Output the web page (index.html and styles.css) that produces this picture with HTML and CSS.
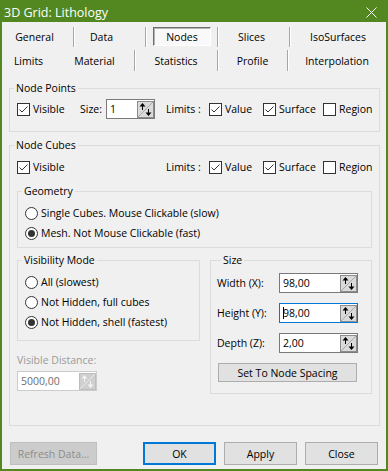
FILE: index.html
```html
<!DOCTYPE html>
<html lang="en">
<head>
  <meta charset="UTF-8">
  <title>3D Grid: Lithology</title>
  <link rel="stylesheet" href="styles.css">
</head>
<body>
  <!-- shared glyphs -->
  <svg class="defs" xmlns="http://www.w3.org/2000/svg">
    <symbol id="spin" viewBox="0 0 17 17">
      <rect x="0.5" y="0.5" width="16" height="16" fill="#dadada" stroke="#8d8d8d"/>
      <path d="M1 16 L16 1" stroke="#a8a8a8"/>
      <path d="M5.5 2 L2.5 5.5 H5 V9 H6 V5.5 H8.5 Z" fill="#000"/>
      <path d="M11.5 15 L8.5 11.5 H11 V8 H12 V11.5 H14.5 Z" fill="#000"/>
    </symbol>
    <symbol id="spin-off" viewBox="0 0 17 17">
      <rect x="0.5" y="0.5" width="16" height="16" fill="#cfcfcf" stroke="#bdbdbd"/>
      <path d="M1 16 L16 1" stroke="#e8e8e8"/>
      <path d="M5.5 2 L2.5 5.5 H5 V9 H6 V5.5 H8.5 Z" fill="#f4f4f4"/>
      <path d="M11.5 15 L8.5 11.5 H11 V8 H12 V11.5 H14.5 Z" fill="#f4f4f4"/>
    </symbol>
    <symbol id="tick" viewBox="0 0 11 11">
      <path d="M1.5 5.5 L4 8 L9.5 2.5" fill="none" stroke="#333" stroke-width="1"/>
    </symbol>
  </svg>

  <div class="window">
    <div class="titlebar">
      <span class="title">3D Grid: Lithology</span>
      <svg class="close" width="11" height="11" viewBox="0 0 11 11"><path d="M0.5 0.5 L10.5 10.5 M10.5 0.5 L0.5 10.5" stroke="#fff" stroke-width="1"/></svg>
    </div>

    <div class="tabs">
      <div class="tab-row">
        <div class="tab tab-general sep">General</div>
        <div class="tab tab-data sep">Data</div>
        <div class="tab tab-nodes sep"><span class="pressed">Nodes</span></div>
        <div class="tab tab-slices sep">Slices</div>
        <div class="tab tab-iso">IsoSurfaces</div>
      </div>
      <div class="tab-row row-2">
        <div class="tab tab-limits">Limits</div>
        <div class="tab tab-material sep">Material</div>
        <div class="tab tab-stats sep">Statistics</div>
        <div class="tab tab-profile sep">Profile</div>
        <div class="tab tab-interp">Interpolation</div>
      </div>
    </div>

    <fieldset class="group points">
      <legend>Node Points</legend>
      <div class="row">
        <label class="check w-visible"><span class="box"><svg><use href="#tick"/></svg></span>Visible</label>
        <span class="lbl w-size">Size:</span>
        <span class="edit w-size-edit"><span class="val">1</span><svg class="spin"><use href="#spin"/></svg></span>
        <span class="lbl w-limits">Limits :</span>
        <label class="check w-value"><span class="box"><svg><use href="#tick"/></svg></span>Value</label>
        <label class="check w-surface"><span class="box"><svg><use href="#tick"/></svg></span>Surface</label>
        <label class="check"><span class="box"></span>Region</label>
      </div>
    </fieldset>

    <fieldset class="group cubes">
      <legend>Node Cubes</legend>
      <div class="row">
        <label class="check w-visible-wide"><span class="box"><svg><use href="#tick"/></svg></span>Visible</label>
        <span class="lbl w-limits">Limits :</span>
        <label class="check w-value"><span class="box"><svg><use href="#tick"/></svg></span>Value</label>
        <label class="check w-surface"><span class="box"><svg><use href="#tick"/></svg></span>Surface</label>
        <label class="check"><span class="box"></span>Region</label>
      </div>

      <fieldset class="group geometry">
        <legend>Geometry</legend>
        <div class="radios">
          <label class="radio"><span class="dot"></span>Single Cubes. Mouse Clickable (slow)</label>
          <label class="radio"><span class="dot on"></span>Mesh. Not Mouse Clickable (fast)</label>
        </div>
      </fieldset>

      <div class="cols">
        <div class="col-left">
          <fieldset class="group visibility">
            <legend>Visibility Mode</legend>
            <div class="radios">
              <label class="radio"><span class="dot"></span>All (slowest)</label>
              <label class="radio"><span class="dot"></span>Not Hidden, full cubes</label>
              <label class="radio"><span class="dot on"></span>Not Hidden, shell (fastest)</label>
            </div>
          </fieldset>
          <div class="dist-label">Visible Distance:</div>
          <span class="edit disabled w-dist"><span class="val">5000,00</span><svg class="spin"><use href="#spin-off"/></svg></span>
        </div>

        <fieldset class="group size">
          <legend>Size</legend>
          <div class="size-row">
            <span class="size-lbl">Width (X):</span>
            <span class="edit w-num"><span class="val">98,00</span><svg class="spin"><use href="#spin"/></svg></span>
          </div>
          <div class="size-row">
            <span class="size-lbl">Height (Y):</span>
            <span class="edit w-num focused"><span class="val caret">98,00</span><svg class="spin"><use href="#spin"/></svg></span>
          </div>
          <div class="size-row">
            <span class="size-lbl">Depth (Z):</span>
            <span class="edit w-num"><span class="val">2,00</span><svg class="spin"><use href="#spin"/></svg></span>
          </div>
          <button class="btn btn-spacing">Set To Node Spacing</button>
        </fieldset>
      </div>
    </fieldset>

    <div class="actions">
      <button class="btn btn-refresh" disabled>Refresh Data...</button>
      <button class="btn btn-ok">OK</button>
      <button class="btn">Apply</button>
      <button class="btn">Close</button>
    </div>
  </div>
</body>
</html>
```

FILE: styles.css
```css
:root {
  --win-green: #538820;
  --face: #f0f0f0;
  --frame: #dcdcdc;
  --edit-border: #7a7a7a;
  --focus: #0078d7;
  --ink: #000;
  --muted: #9a9a9a;
}

* {
  margin: 0;
  padding: 0;
  box-sizing: border-box;
}

body {
  width: 388px;
  height: 471px;
  overflow: hidden;
  font-family: "Open Sans", "Noto Sans", sans-serif;
  font-size: 10.5px;
  color: var(--ink);
  background-color: var(--face);
}

.defs {
  display: none;
}

.window {
  width: 388px;
  height: 471px;
  display: flex;
  flex-direction: column;
  border: 2px solid var(--win-green);
  border-top: 0;
  background-color: var(--face);
}

/* title bar */
.titlebar {
  height: 22px;
  flex: none;
  display: flex;
  align-items: center;
  justify-content: space-between;
  padding: 0 9px 0 2px;
  background-color: var(--win-green);
  color: #fff;
}

.title {
  font-size: 12.5px;
  margin-top: 2px;
}

.close {
  display: block;
  margin-top: 3px;
}

/* tab headers */
.tab-row {
  display: flex;
  height: 20px;
  margin-top: 5px;
}

.tab-row.row-2 {
  height: 21px;
  margin-top: 3px;
}

.tab {
  display: flex;
  align-items: center;
  justify-content: center;
  flex: none;
}

.tab.sep {
  border-right: 1px solid #a6a6a6;
  box-shadow: 1px 0 0 #fff;
}

.tab-general { width: 72px; padding-right: 6px; }
.tab-data { width: 72px; padding-right: 16px; }
.tab-nodes { width: 72px; padding: 0 6px 1px 7px; align-items: stretch; }
.tab-slices { width: 72px; padding-right: 4px; }
.tab-iso { flex: 1; }

.tab-limits { width: 53px; }
.tab-material { width: 80px; }
.tab-stats { width: 83px; }
.tab-profile { width: 70px; }
.tab-interp { flex: 1; }

.pressed {
  flex: 1;
  display: flex;
  align-items: center;
  justify-content: center;
  padding-top: 1px;
  background-color: #f9f9f9;
  border: 1px solid #fff;
  border-top-color: #6e6e6e;
  border-left-color: #6e6e6e;
  box-shadow: inset 1px 1px 0 #b4b4b4;
}

/* group boxes */
.group {
  border: 1px solid var(--frame);
  min-width: 0;
}

.group > legend {
  margin-left: 4px;
  padding: 0 2px;
  height: 16px;
  line-height: 16px;
}

.points {
  margin: 9px 6px 0 7px;
  padding: 3px 0 12px;
}

.cubes {
  margin: 5px 6px 0 7px;
  padding: 4px 0 31px;
}

.geometry {
  margin: 6px 7px 0;
  padding: 4px 0 4px;
}

.row {
  display: flex;
  align-items: center;
  height: 20px;
  padding-left: 7px;
}

.lbl,
.check {
  flex: none;
}

.w-visible { width: 63px; }
.w-visible-wide { width: 138px; }
.w-size { width: 26px; }
.w-size-edit { width: 49px; }
.w-limits { width: 43px; margin-left: 11px; }
.w-value { width: 54px; }
.w-surface { width: 60px; }

.check,
.radio {
  display: flex;
  align-items: center;
  gap: 3px;
}

.box {
  width: 13px;
  height: 13px;
  flex: none;
  border: 1px solid #333;
  background-color: #fff;
}

.box svg {
  display: block;
  width: 11px;
  height: 11px;
}

.radios {
  padding-left: 7px;
}

.radio {
  height: 20px;
}

.dot {
  position: relative;
  width: 13px;
  height: 13px;
  flex: none;
  border: 1px solid #333;
  border-radius: 50%;
  background-color: #fff;
}

.dot.on::after {
  content: "";
  position: absolute;
  inset: 2px;
  border-radius: 50%;
  background-color: #333;
}

/* edit boxes with spinners */
.edit {
  display: flex;
  align-items: center;
  height: 20px;
  flex: none;
  padding-left: 3px;
  border: 1px solid var(--edit-border);
  background-color: #fff;
}

.edit .val {
  flex: 1;
  position: relative;
}

.edit .spin {
  width: 17px;
  height: 17px;
  flex: none;
}

.edit.focused {
  border-color: var(--focus);
}

.caret::before {
  content: "";
  position: absolute;
  left: 0;
  top: 1px;
  bottom: 1px;
  border-left: 1px solid #000;
}

.edit.disabled {
  border-color: #cccccc;
  color: #6d6d6d;
}

/* lower part of node cubes */
.cols {
  display: flex;
  gap: 10px;
  margin: 4px 7px 0;
}

.col-left {
  width: 183px;
  flex: none;
}

.visibility {
  padding: 4px 0 8px;
}

.dist-label {
  margin-top: 11px;
  height: 16px;
  line-height: 16px;
  color: var(--muted);
}

.w-dist {
  width: 80px;
  margin-top: 3px;
}

.size {
  flex: 1;
  padding: 5px 0 11px 6px;
}

.size-row {
  display: flex;
  align-items: center;
  height: 20px;
}

.size-row + .size-row {
  margin-top: 10px;
}

.size-lbl {
  width: 62px;
  flex: none;
}

.w-num {
  width: 79px;
}

.btn {
  display: flex;
  align-items: center;
  justify-content: center;
  font: inherit;
  color: var(--ink);
  background-color: #e1e1e1;
  border: 1px solid #adadad;
}

.btn-spacing {
  width: 139px;
  height: 19px;
  margin: 10px 0 0 1px;
}

/* dialog buttons */
.actions {
  display: flex;
  gap: 8px;
  margin-top: 16px;
  padding: 0 8px;
}

.actions .btn {
  width: 73px;
  height: 23px;
}

.actions .btn-refresh {
  width: 87px;
  margin-right: auto;
  background-color: #cccccc;
  border-color: #bfbfbf;
  color: #8c8c8c;
}

.actions .btn-ok {
  border: 2px solid var(--focus);
}
```
